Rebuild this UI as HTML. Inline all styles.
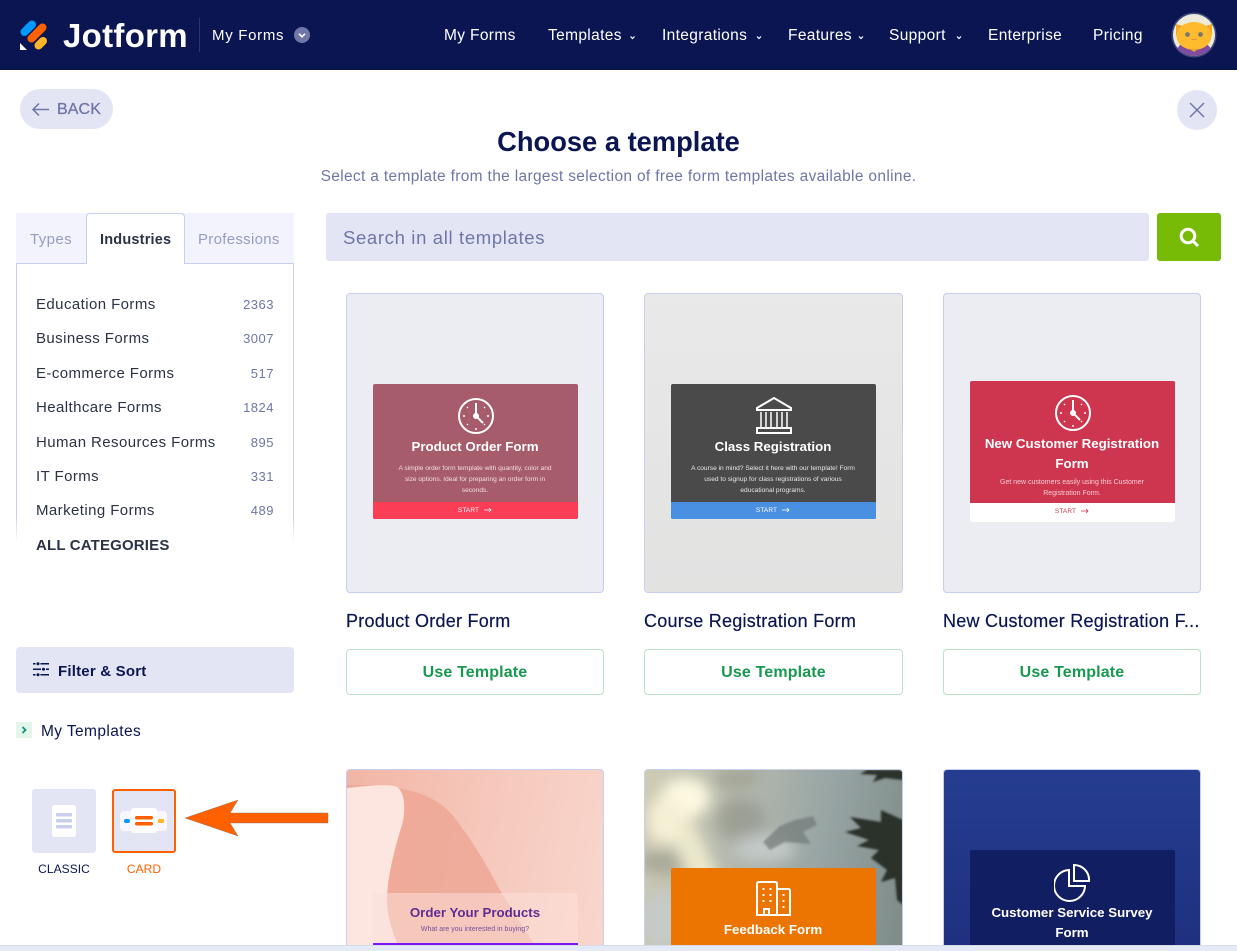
<!DOCTYPE html>
<html lang="en"><head><meta charset="utf-8"><title>Choose a template</title>
<style>
html,body{margin:0;padding:0;background:#fff;width:1237px;height:951px;overflow:hidden}
body{font-family:"Liberation Sans",sans-serif;color:#0a1551}
#w{position:relative;width:1237px;height:951px;overflow:hidden}
.a{position:absolute;box-sizing:border-box}
.t{position:absolute;white-space:nowrap;line-height:20px;height:20px}
.nav{color:#fff;font-size:15.500px;top:26px;letter-spacing:.35px}
.cat{left:36px;font-size:15px;color:#2c3345;letter-spacing:.42px}
.cnt{right:963px;font-size:13px;color:#6f76a7;letter-spacing:.5px}
.thumb{position:absolute;box-sizing:border-box;width:258px;border:1px solid #c8ceed;border-radius:4px;overflow:hidden}
.name{font-size:18px;color:#0a1551;top:611px;letter-spacing:.25px;-webkit-text-stroke:.2px #0a1551}
.use{position:absolute;top:649px;height:46px;width:258px;box-sizing:border-box;border:1px solid #b9e2c9;border-radius:4px;text-align:center;line-height:45px;color:#18994f;font-size:16px;font-weight:bold;letter-spacing:.15px}
.card{position:absolute;left:25.500px;width:205px;border-radius:2px;overflow:hidden;text-align:center;color:#fff}
.card .h{position:absolute;left:0;width:100%;font-weight:bold;font-size:13.300px;line-height:20px;white-space:nowrap}
.card .p{position:absolute;left:0;right:0;font-size:6.600px;line-height:11px;color:#f2dfe3;white-space:nowrap}
.card .b{position:absolute;left:0;width:100%;height:17px;font-size:6.500px;line-height:17px;letter-spacing:.1px}
.card .b svg{vertical-align:-1px;margin-left:5px}
</style></head>
<body><div id="w">
<!-- header -->
<div class="a" style="left:0;top:0;width:1237px;height:70px;background:#0a1551"></div>
<svg class="a" style="left:0;top:0" width="60" height="60" fill="none" stroke-linecap="round" stroke-width="8">
<path d="M24.500 32L32 24.500" stroke="#0099ff"/>
<path d="M31.500 38.500L42.500 27.500" stroke="#ff6100"/>
<path d="M38.500 45.500L43 41" stroke="#ffb629"/>
<path d="M20 43v7h7z" fill="#fff" stroke="none"/>
</svg>
<div class="t" style="left:63px;top:19px;font-size:33px;font-weight:bold;color:#fff;line-height:34px;height:34px;letter-spacing:.3px">Jotform</div>
<div class="a" style="left:199px;top:18px;width:1px;height:34px;background:#2b3670"></div>
<div class="t" style="left:212px;top:26px;font-size:15px;color:#fff;letter-spacing:.7px">My Forms</div>
<svg class="a" style="left:294px;top:27px" width="16" height="16"><circle cx="8" cy="8" r="8" fill="#7077a8"/><path d="M5 6.800l3 3 3-3" fill="none" stroke="#fff" stroke-width="1.600"/></svg>
<div class="t nav" style="left:444px">My Forms</div>
<div class="t nav" style="left:548px">Templates</div>
<div class="t nav" style="left:662px">Integrations</div>
<div class="t nav" style="left:788px">Features</div>
<div class="t nav" style="left:889px">Support</div>
<div class="t nav" style="left:988px">Enterprise</div>
<div class="t nav" style="left:1093px">Pricing</div>
<svg class="a" style="left:0;top:0" width="1000" height="70" fill="none" stroke="#fff" stroke-width="1.200"><path d="M630.500 36.500l2 2 2-2M757 36.500l2 2 2-2M859 36.500l2 2 2-2M957 36.500l2 2 2-2"/></svg>
<svg class="a" style="left:1171px;top:12px" width="46" height="46" viewBox="0 0 46 46">
<defs><clipPath id="av"><circle cx="23" cy="23" r="21"/></clipPath></defs>
<circle cx="23" cy="23" r="22.500" fill="#3f4a7c"/>
<g clip-path="url(#av)"><rect width="46" height="46" fill="#eceadb"/>
<path d="M4 46c0-12 9-18 19-18s19 6 19 18z" fill="#7f4ca0"/>
<path d="M5 12l10 3L5 24zM41 12L31 15l10 9z" fill="#f5a623"/>
<ellipse cx="23" cy="24" rx="17.500" ry="14" fill="#fdbb2d"/>
<circle cx="16.500" cy="22.500" r="2.400" fill="#7a7a6a"/><circle cx="29.500" cy="22.500" r="2.400" fill="#7a7a6a"/>
<path d="M19.500 27q3.500 2.500 7 0" fill="#e98a3a"/><path d="M19 37l4 3 4-3z" fill="#f6a821"/></g>
</svg>
<!-- back / close -->
<div class="a" style="left:20px;top:89px;width:93px;height:40px;border-radius:20px;background:#e3e5f5"></div>
<svg class="a" style="left:31px;top:100px" width="20" height="18" fill="none" stroke="#6f76a7" stroke-width="1.500"><path d="M2 9.500h16M8 3.500l-6 6 6 6"/></svg>
<div class="t" style="left:57px;top:100px;font-size:16px;color:#6f76a7;letter-spacing:.1px;-webkit-text-stroke:.3px #6f76a7">BACK</div>
<div class="a" style="left:1177px;top:90px;width:40px;height:40px;border-radius:50%;background:#e3e5f5"></div>
<svg class="a" style="left:1189px;top:102px" width="16" height="16" stroke="#6f76a7" stroke-width="1.500"><path d="M1 1l14 14M15 1L1 15"/></svg>
<!-- title -->
<div class="t" style="left:0;width:1237px;text-align:center;top:125px;font-size:27.300px;line-height:34px;height:34px;font-weight:bold;color:#0a1551">Choose a template</div>
<div class="t" style="left:0;width:1237px;text-align:center;top:167px;font-size:15.500px;color:#6f76a7;letter-spacing:.33px">Select a template from the largest selection of free form templates available online.</div>
<!-- tabs -->
<div class="a" style="left:16px;top:213px;width:278px;height:51px;background:#f3f3fe"></div>
<div class="a" style="left:16px;top:263px;width:278px;height:280px;border:1px solid #c8ceed;border-bottom:0;border-top:0;-webkit-mask-image:linear-gradient(#000 90%,transparent);mask-image:linear-gradient(#000 90%,transparent)"></div>
<div class="a" style="left:16px;top:263px;width:278px;height:1px;background:#c8ceed"></div>
<div class="a" style="left:86px;top:213px;width:99px;height:51px;background:#fff;border:1px solid #c8ceed;border-bottom:0;border-radius:4px 4px 0 0"></div>
<div class="t" style="left:30px;top:230px;font-size:15px;color:#979cc0;letter-spacing:.4px">Types</div>
<div class="t" style="left:100px;top:230px;font-size:14.500px;font-weight:bold;color:#2c3345;letter-spacing:.2px">Industries</div>
<div class="t" style="left:198px;top:230px;font-size:15px;color:#979cc0;letter-spacing:.3px">Professions</div>
<div class="t cat" style="top:295px">Education Forms</div><div class="t cnt" style="top:295px">2363</div>
<div class="t cat" style="top:329px">Business Forms</div><div class="t cnt" style="top:329px">3007</div>
<div class="t cat" style="top:364px">E-commerce Forms</div><div class="t cnt" style="top:364px">517</div>
<div class="t cat" style="top:398px">Healthcare Forms</div><div class="t cnt" style="top:398px">1824</div>
<div class="t cat" style="top:433px">Human Resources Forms</div><div class="t cnt" style="top:433px">895</div>
<div class="t cat" style="top:467px">IT Forms</div><div class="t cnt" style="top:467px">331</div>
<div class="t cat" style="top:501px">Marketing Forms</div><div class="t cnt" style="top:501px">489</div>
<div class="t" style="left:36px;top:536px;font-size:15px;font-weight:bold;color:#2c3345;letter-spacing:.17px">ALL CATEGORIES</div>
<!-- filter -->
<div class="a" style="left:16px;top:647px;width:278px;height:46px;background:#e3e5f5;border-radius:4px"></div>
<svg class="a" style="left:33px;top:662px" width="16" height="15" fill="#0a1551"><rect y="1" width="16" height="1.500"/><rect y="6.500" width="16" height="1.500"/><rect y="12" width="16" height="1.500"/><circle cx="5" cy="1.700" r="2" stroke="#e3e5f5"/><circle cx="10.500" cy="7.200" r="2" stroke="#e3e5f5"/><circle cx="5" cy="12.700" r="2" stroke="#e3e5f5"/></svg>
<div class="t" style="left:58px;top:662px;font-size:15px;font-weight:bold;color:#0a1551;letter-spacing:.2px">Filter &amp; Sort</div>
<div class="a" style="left:16px;top:722px;width:16px;height:16px;background:#e4f5ec"></div>
<svg class="a" style="left:21px;top:726px" width="7" height="8" fill="none" stroke="#12947f" stroke-width="1.800"><path d="M1.500 1l3 3-3 3"/></svg>
<div class="t" style="left:41px;top:722px;font-size:15.500px;color:#0a1551;letter-spacing:.4px">My Templates</div>
<!-- layouts -->
<div class="a" style="left:32px;top:789px;width:64px;height:64px;background:#e3e5f5;border-radius:3px"></div>
<svg class="a" style="left:52px;top:805px" width="24" height="32"><rect width="24" height="32" rx="3" fill="#fff"/><g fill="#c8ceed"><rect x="4" y="8" width="16" height="3.500" rx="1"/><rect x="4" y="14" width="16" height="3.500" rx="1"/><rect x="4" y="20" width="16" height="3.500" rx="1"/></g></svg>
<div class="t" style="left:32px;width:64px;text-align:center;top:859px;font-size:12px;color:#0a1551;letter-spacing:.05px">CLASSIC</div>
<div class="a" style="left:112px;top:789px;width:64px;height:64px;background:#e3e5f5;border:2px solid #ff6100;border-radius:3px"></div>
<svg class="a" style="left:120px;top:808px" width="48" height="26"><rect y="3" width="47" height="20" rx="4" fill="#f7f7fd"/><rect x="11" width="26" height="25" rx="3" fill="#fff"/><rect x="4" y="11" width="6" height="4" rx="2" fill="#0099ff"/><rect x="38" y="11" width="6" height="4" rx="1" fill="#ffb629"/><rect x="15" y="8" width="18" height="3.500" rx="1.700" fill="#ff6100"/><rect x="15" y="14" width="18" height="3.500" rx="1.700" fill="#ff6100"/></svg>
<div class="t" style="left:112px;width:64px;text-align:center;top:859px;font-size:12px;color:#ff6100;letter-spacing:.05px">CARD</div>
<svg class="a" style="left:184px;top:798px" width="146" height="40"><path d="M1 20L54 2 46 15H144V25H46L54 38z" fill="#ff6100" stroke="#7d6a5e" stroke-width=".4"/></svg>
<!-- search -->
<div class="a" style="left:326px;top:213px;width:823px;height:48px;background:#e3e5f5;border-radius:3px"></div>
<div class="t" style="left:343px;top:228px;font-size:18.500px;color:#6f76a7;letter-spacing:.65px">Search in all templates</div>
<div class="a" style="left:1157px;top:213px;width:64px;height:48px;background:#78bb07;border-radius:3px"></div>
<svg class="a" style="left:1178px;top:226px" width="22" height="22" fill="none" stroke="#fff" stroke-width="3"><circle cx="10" cy="10" r="6.800"/><path d="M15 15l5 5"/></svg>
<!-- row 1 -->
<div class="thumb" style="left:346px;top:293px;height:300px;background:#ecedf3">
 <div class="card" style="top:90px;height:135px;background:#a65c6a">
  <svg class="a" style="left:84px;top:13px" width="38" height="38" fill="none" stroke="#fff" stroke-width="2"><circle cx="19" cy="19" r="17"/><path d="M19 6v13l7 7"/><circle cx="19" cy="19" r="2"/><path d="M19 31v2M6 19h2M30 19h2M10 10l1 1M28 10l-1 1M10 28l1-1M28 28l-1-1" stroke-width="1.400"/></svg>
  <div class="h" style="top:53px">Product Order Form</div>
  <div class="p" style="top:79px">A simple order form template with quantity, color and<br>size options. Ideal for preparing an order form in<br>seconds.</div>
  <div class="b" style="top:118px;background:#fc3d56">START<svg width="8" height="6" fill="none" stroke="#fff" stroke-width=".8"><path d="M0 3h7M5 1l2 2-2 2"/></svg></div>
 </div>
</div>
<div class="thumb" style="left:644px;top:293px;height:300px;width:259px;background:linear-gradient(#e9e9e9,#e5e5e5 50%,#e2e2e1)">
 <div class="card" style="top:90px;height:135px;background:#4a4a4a">
  <svg class="a" style="left:84px;top:13px" width="38" height="38" fill="none" stroke="#fff" stroke-width="2"><path d="M2 11L19 1l17 10v2H2z"/><path d="M6 15v15M11 15v15M16 15v15M22 15v15M27 15v15M32 15v15" stroke-width="1.500"/><rect x="2" y="31" width="34" height="5"/></svg>
  <div class="h" style="top:53px">Class Registration</div>
  <div class="p" style="top:79px;color:#e8e8e8">A course in mind? Select it here with our template! Form<br>used to signup for class registrations of various<br>educational programs.</div>
  <div class="b" style="top:118px;background:#4a90e2">START<svg width="8" height="6" fill="none" stroke="#fff" stroke-width=".8"><path d="M0 3h7M5 1l2 2-2 2"/></svg></div>
 </div>
</div>
<div class="thumb" style="left:943px;top:293px;height:300px;background:#ecedf3">
 <div class="card" style="top:87px;height:141px;background:#ce354f">
  <svg class="a" style="left:84px;top:13px" width="38" height="38" fill="none" stroke="#fff" stroke-width="2"><circle cx="19" cy="19" r="17"/><path d="M19 6v13l7 7"/><circle cx="19" cy="19" r="2"/><path d="M19 31v2M6 19h2M30 19h2M10 10l1 1M28 10l-1 1M10 28l1-1M28 28l-1-1" stroke-width="1.400"/></svg>
  <div class="h" style="top:53px">New Customer Registration<br>Form</div>
  <div class="p" style="top:96px;font-size:7px;color:#f5cdd4">Get new customers easily using this Customer<br>Registration Form.</div>
  <div class="b" style="top:122px;height:19px;background:#fff;color:#ce354f;line-height:18px">START<svg width="8" height="6" fill="none" stroke="#ce354f" stroke-width=".8"><path d="M0 3h7M5 1l2 2-2 2"/></svg></div>
 </div>
</div>
<div class="t name" style="left:346px">Product Order Form</div>
<div class="t name" style="left:644px">Course Registration Form</div>
<div class="t name" style="left:943px">New Customer Registration F...</div>
<div class="use" style="left:346px">Use Template</div>
<div class="use" style="left:644px;width:259px">Use Template</div>
<div class="use" style="left:943px">Use Template</div>
<!-- row 2 -->
<div class="thumb" style="left:346px;top:769px;height:190px;background:linear-gradient(100deg,#f2b5a5,#f6c9bd 55%,#f9d6cc)">
 <svg class="a" style="left:0;top:0" width="256" height="188"><path d="M0 15C50 15 85 20 107 47C125 70 140 95 155 124L196 188H0z" fill="#eea594" opacity=".8"/><path d="M0 18C25 15 45 14 50 17C58 22 59 40 55 55C47 80 40 110 40 130C40 150 47 165 56 188H0z" fill="#fde5e0"/></svg>
 <div class="card" style="top:123px;height:60px;background:rgba(252,224,216,.55)">
  <div class="h" style="top:10px;color:#5e2d91">Order Your Products</div>
  <div class="p" style="top:31px;color:#75509f;font-size:7px">What are you interested in buying?</div>
  <div class="a" style="left:0;top:50px;width:100%;height:2px;background:#7d16f5"></div>
 </div>
</div>
<div class="thumb" style="left:644px;top:769px;height:190px;width:259px;background:linear-gradient(100deg,#cfcbb4,#b4b9ae 35%,#98a5a4 65%,#7d8a88)">
 <svg class="a" style="left:0;top:0" width="258" height="188"><defs><filter id="bl"><feGaussianBlur stdDeviation="7"/></filter><filter id="bs"><feGaussianBlur stdDeviation="1"/></filter></defs>
 <g filter="url(#bl)"><path d="M70 0h50l-20 20-30-5z" fill="#8f8f7c" opacity=".5"/><ellipse cx="20" cy="92" rx="30" ry="12" fill="#98988a" opacity=".6"/><ellipse cx="40" cy="28" rx="25" ry="20" fill="#fdf9e0"/><path d="M10 35L45 45 85 130 55 130z" fill="#ece8cc"/><ellipse cx="20" cy="50" rx="18" ry="25" fill="#f5f0d5"/><ellipse cx="95" cy="50" rx="24" ry="22" fill="#8d9083" opacity=".6"/><ellipse cx="20" cy="150" rx="25" ry="30" fill="#c6cbc8"/><ellipse cx="120" cy="78" rx="30" ry="14" fill="#c3c9c8"/></g>
 <g filter="url(#bs)"><path d="M258 0v10L240 8 228 12 232 5 215 4 222 0zM258 50L236 40 236 52 205 47 216 58 200 62 224 70 212 76 234 80 226 88 242 100 236 112 250 108 252 130 258 135z" fill="#2b302c"/><path d="M118 72L135 56 150 50 168 46 172 55 158 62 166 74 140 72 125 80z" fill="#6f7978" opacity=".7"/></g></svg>
 <div class="card" style="top:98px;height:90px;background:#ec7400">
  <svg class="a" style="left:84px;top:12px" width="38" height="38" fill="none" stroke="#fff" stroke-width="2"><path d="M2 35V4q0-2 2-2h16q2 0 2 2v31zM22 9h11q2 0 2 2v24H22zM2 35h33M14 35v-6H9v6"/><path d="M7.500 9h2M14.500 9h2M7.500 15h2M14.500 15h2M7.500 21h2M14.500 21h2M27.500 15h2M27.500 21h2M27.500 27h2" stroke-width="2"/></svg>
  <div class="h" style="top:52px">Feedback Form</div>
 </div>
</div>
<div class="thumb" style="left:943px;top:769px;height:190px;background:linear-gradient(#253d90,#1f2f7e)">
 <div class="card" style="top:80px;height:110px;background:#121e62">
  <svg class="a" style="left:84px;top:14px" width="38" height="38" fill="none" stroke="#fff" stroke-width="2"><path d="M15 6A15.500 15.500 0 1 0 31 22H15z"/><path d="M20 1a15 15 0 0 1 15 16H20z"/></svg>
  <div class="h" style="top:53px">Customer Service Survey<br>Form</div>
 </div>
</div>
<!-- bottom strip -->
<div class="a" style="left:0;top:945px;width:1237px;height:6px;background:#e4ebf6;border-top:1px solid #d6dbe8"></div>
</div></body></html>
